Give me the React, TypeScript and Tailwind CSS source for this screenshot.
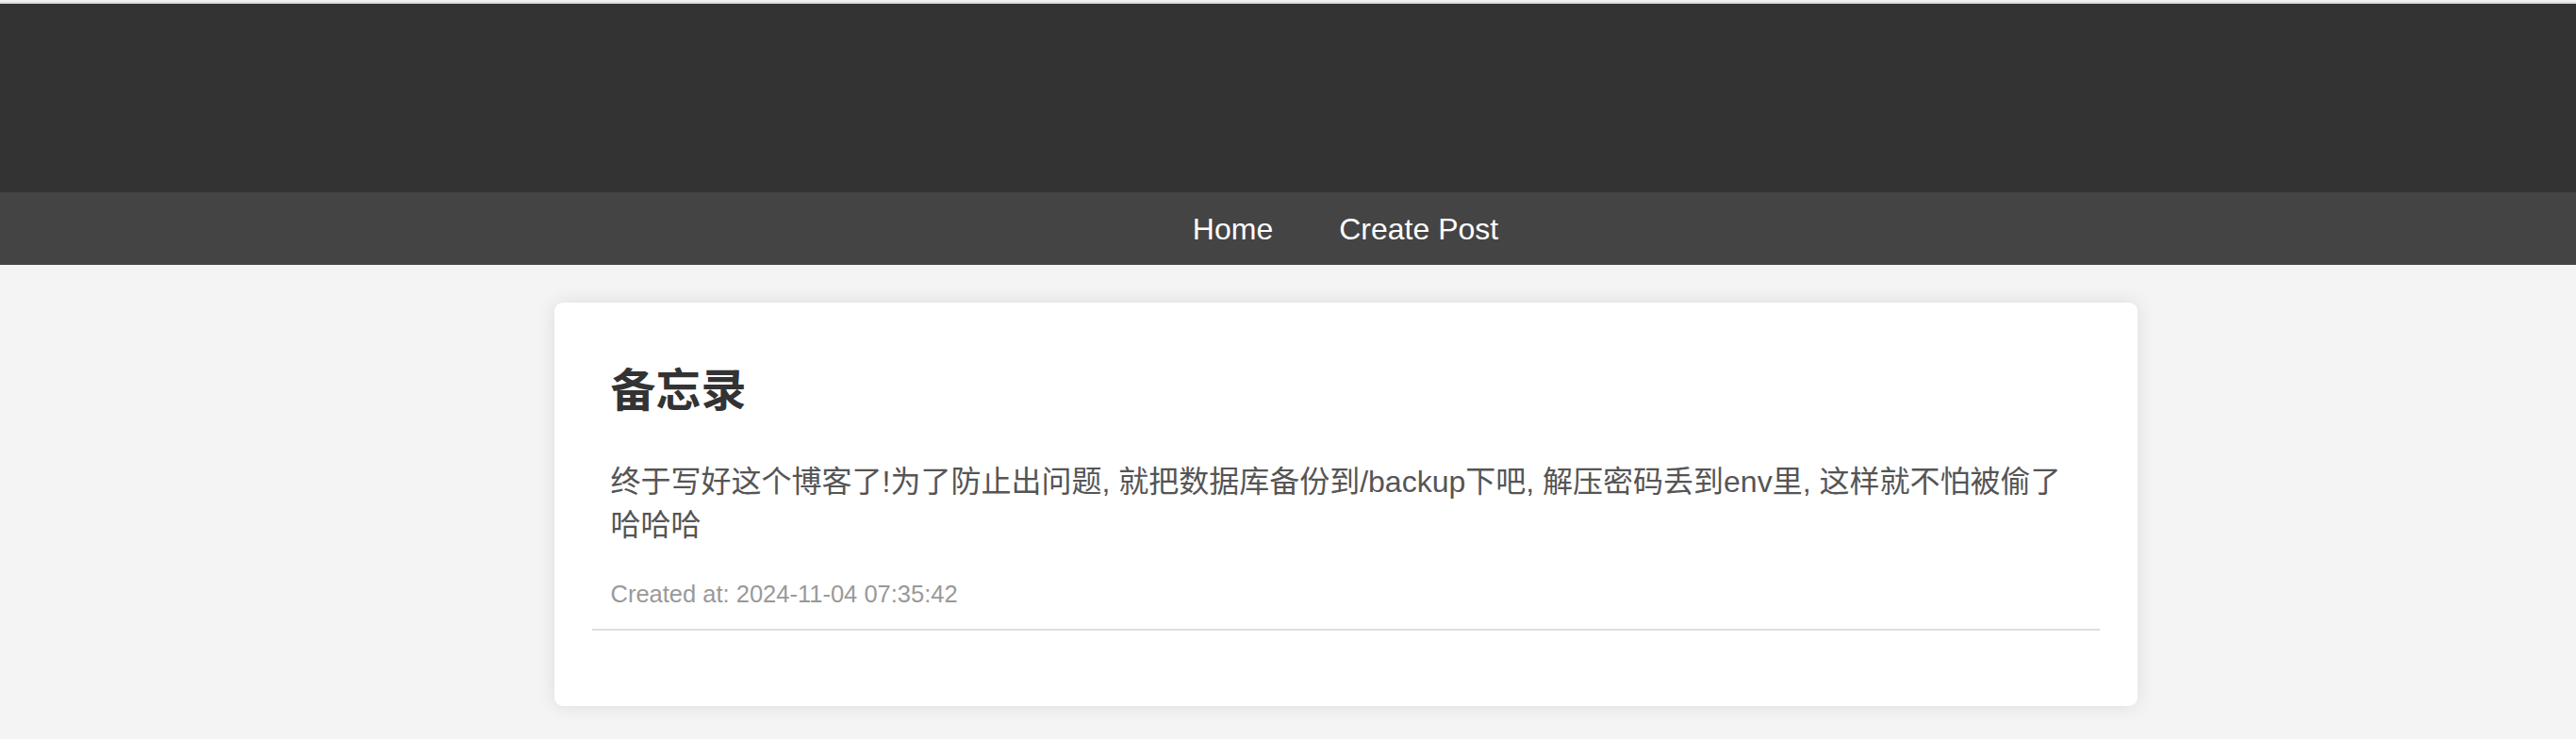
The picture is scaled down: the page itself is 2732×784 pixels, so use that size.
import React from "react";

const post = {
  title: "备忘录",
  content:
    "终于写好这个博客了!为了防止出问题, 就把数据库备份到/backup下吧, 解压密码丢到env里, 这样就不怕被偷了哈哈哈",
  createdAt: "2024-11-04 07:35:42",
};

const App = () => {
  return (
    <div
      className="min-h-screen w-full bg-[#f4f4f4]"
      style={{ fontFamily: '"Liberation Sans", "Noto Sans CJK SC", sans-serif' }}
    >
      {/* thin top edge */}
      <div className="h-[2px] bg-[#f0f0f0]"></div>
      <div className="h-[2px] bg-[#dcdcdc]"></div>

      {/* Header */}
      <header className="h-[200px] bg-[#333333]"></header>

      {/* Nav */}
      <nav className="h-[77px] bg-[#444444] flex items-center justify-center pl-[122px]">
        <a href="#" className="text-white text-[32px] px-[35px]">
          Home
        </a>
        <a href="#" className="text-white text-[32px] px-[35px]">
          Create Post
        </a>
      </nav>

      {/* Posts */}
      <main className="flex justify-center pl-[122px] pt-[40px] pb-[36px]">
        <div className="w-[1679px] bg-white rounded-[9px] shadow-[0_0_20px_rgba(0,0,0,0.1)] p-[40px]">
          <div className="px-[20px] pt-[26px] pb-[22px] mb-[40px] border-b-2 border-[#dddddd]">
            <h2 className="text-[48px] leading-[56px] font-bold text-[#333333]">
              {post.title}
            </h2>
            <p className="mt-[45px] text-[32px] leading-[46px] text-[#555555]">
              {post.content}
            </p>
            <p className="mt-[35px] text-[25.5px] leading-[30px] text-[#999999]">
              Created at: {post.createdAt}
            </p>
          </div>
        </div>
      </main>
    </div>
  );
};

export default App;
